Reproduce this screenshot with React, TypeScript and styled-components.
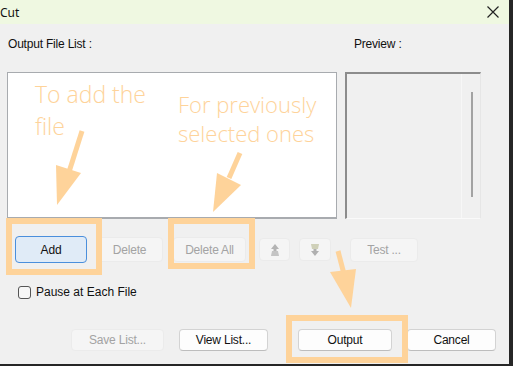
import React from "react";
import styled, { createGlobalStyle } from "styled-components";

const Global = createGlobalStyle`
  html, body { margin: 0; padding: 0; background: #262626; }
  body { width: 513px; height: 366px; overflow: hidden; font-family: "Liberation Sans", Arial, sans-serif; }
`;

const ORANGE = "#fed39a";

const Window = styled.div`
  position: relative;
  width: 509px;
  height: 364px;
  background: #f0f0f0;
  display: flex;
  flex-direction: column;
  font-size: 12px;
  color: #111;
`;

const TitleBar = styled.div`
  height: 24px;
  background: #eff8e1;
  display: flex;
  align-items: center;
  justify-content: space-between;
  padding: 0 10px 0 0;
  font-family: "Noto Sans", sans-serif;
  font-size: 12px;
`;

const Body = styled.div`
  flex: 1;
  display: flex;
  flex-direction: column;
  padding: 13px 0 0 7px;
`;

const LabelRow = styled.div`
  display: flex;
  height: 14px;
  line-height: 14px;
`;

const Label = styled.div<{ $w?: number }>`
  width: ${(p) => p.$w ?? 0}px;
  padding-left: ${(p) => (p.$w ? 1 : 4)}px;
  letter-spacing: -0.2px;
`;

const ListsRow = styled.div`
  display: flex;
  gap: 8px;
  margin-top: 21px;
  height: 147px;
`;

const ListBox = styled.div`
  width: 330px;
  box-sizing: border-box;
  background: #fff;
  border: 1px solid #a8abaf;
  border-bottom-width: 2px;
`;

const PreviewBox = styled.div`
  width: 136px;
  box-sizing: border-box;
  background: #f0f0f0;
  border-top: 2px solid #8c8c8c;
  border-left: 2px solid #8c8c8c;
  border-right: 1px solid #e6e6e6;
  border-bottom: 1px solid #fafafa;
  display: flex;
  justify-content: flex-end;
`;

const ScrollTrack = styled.div`
  width: 19px;
  border-left: 1px solid #f7f7f7;
  display: flex;
  justify-content: center;
  padding-top: 18px;
  box-sizing: border-box;
`;

const ScrollThumb = styled.div`
  width: 2px;
  height: 105px;
  margin-left: 1px;
  background: #a3a3a3;
`;

const ButtonRow = styled.div`
  display: flex;
  align-items: center;
  margin-top: 17px;
  padding-left: 8px;
  height: 27px;
`;

const Btn = styled.div<{ $w: number; $h?: number; $gap?: number; $state?: "primary" | "disabled" | "normal" }>`
  width: ${(p) => p.$w}px;
  height: ${(p) => p.$h ?? 22}px;
  margin-right: ${(p) => p.$gap ?? 0}px;
  box-sizing: border-box;
  border-radius: 4px;
  display: flex;
  align-items: center;
  justify-content: center;
  letter-spacing: -0.2px;
  ${(p) =>
    p.$state === "primary"
      ? `background:#e0ebf7;border:1px solid #4b8fdc;color:#111;`
      : p.$state === "disabled"
      ? `background:#f5f5f5;border:1px solid #ebebeb;color:#a3a3a3;`
      : `background:#fdfdfd;border:1px solid #d3d3d3;border-bottom-color:#bdbdbd;color:#111;`}
`;

const CheckRow = styled.label`
  display: flex;
  align-items: center;
  gap: 5px;
  margin-top: 22px;
  padding-left: 11px;
  height: 14px;
`;

const CheckBox = styled.span`
  width: 13px;
  height: 13px;
  box-sizing: border-box;
  border: 1px solid #555;
  border-radius: 3px;
  background: #f6f6f6;
`;

const BottomRow = styled.div`
  display: flex;
  align-items: center;
  margin-top: 30px;
  padding-left: 64px;
`;

const Overlay = styled.svg`
  position: absolute;
  left: 0;
  top: 0;
  pointer-events: none;
`;

const Note = styled.div<{ $x: number; $y: number; $size: number; $lh: number }>`
  position: absolute;
  left: ${(p) => p.$x}px;
  top: ${(p) => p.$y}px;
  font-family: "Open Sans", "Noto Sans", sans-serif;
  font-weight: 300;
  font-size: ${(p) => p.$size}px;
  line-height: ${(p) => p.$lh}px;
  color: ${ORANGE};
  white-space: pre;
  pointer-events: none;
`;

const UpIcon = () => (
  <svg width="10" height="14" viewBox="0 0 10 14">
    <path d="M5 1 L9 6 L6.5 6 L6.5 8 L3.5 8 L3.5 6 L1 6 Z" fill="#b4b4b4" />
    <path d="M2 8 L8 8 L9 13 L1 13 Z" fill="#c4c4c4" />
  </svg>
);

const DownIcon = () => (
  <svg width="10" height="14" viewBox="0 0 10 14">
    <path d="M1 1 L9 1 L8 6 L2 6 Z" fill="#cfd0b8" />
    <path d="M5 13 L9 8 L6.5 8 L6.5 6 L3.5 6 L3.5 8 L1 8 Z" fill="#b0b0b0" />
  </svg>
);

const CloseIcon = () => (
  <svg width="12" height="12" viewBox="0 0 12 12">
    <path d="M0.5 0.5 L11.5 11.5 M11.5 0.5 L0.5 11.5" stroke="#222" strokeWidth="1.2" />
  </svg>
);

export default function App() {
  return (
    <>
      <Global />
      <Window>
        <TitleBar>
          <span>Cut</span>
          <CloseIcon />
        </TitleBar>
        <Body>
          <LabelRow>
            <Label $w={345}>Output File List :</Label>
            <Label $w={120}>Preview :</Label>
          </LabelRow>
          <ListsRow>
            <ListBox />
            <PreviewBox>
              <ScrollTrack>
                <ScrollThumb />
              </ScrollTrack>
            </PreviewBox>
          </ListsRow>
          <ButtonRow>
            <Btn $w={72} $h={27} $gap={9} $state="primary">Add</Btn>
            <Btn $w={67} $h={25} $gap={10} $state="disabled">Delete</Btn>
            <Btn $w={73} $h={25} $gap={13} $state="disabled">Delete All</Btn>
            <Btn $w={31} $h={23} $gap={9} $state="disabled"><UpIcon /></Btn>
            <Btn $w={32} $h={23} $gap={19} $state="disabled"><DownIcon /></Btn>
            <Btn $w={68} $h={24} $state="disabled">Test ...</Btn>
          </ButtonRow>
          <CheckRow>
            <CheckBox />
            <span>Pause at Each File</span>
          </CheckRow>
          <BottomRow>
            <Btn $w={93} $gap={15} $state="disabled">Save List...</Btn>
            <Btn $w={89} $gap={30}>View List...</Btn>
            <Btn $w={94} $gap={15}>Output</Btn>
            <Btn $w={89}>Cancel</Btn>
          </BottomRow>
        </Body>
        <Overlay width="509" height="364" viewBox="0 0 509 364">
          <g fill="none" stroke={ORANGE} strokeWidth="6">
            <rect x="9" y="221" width="90" height="51" />
            <rect x="171" y="221" width="81" height="45" />
            <rect x="289" y="318" width="116" height="42" />
          </g>
          <g stroke={ORANGE} strokeWidth="5" strokeLinecap="butt">
            <line x1="82" y1="131" x2="69" y2="172" />
            <line x1="240" y1="153" x2="229" y2="178" />
            <line x1="338" y1="251" x2="344" y2="274" />
          </g>
          <g fill={ORANGE}>
            <polygon points="56,165 81,173 57,205" />
            <polygon points="217,173 241,185 213,212" />
            <polygon points="330,272 356,269 351,308" />
          </g>
        </Overlay>
        <Note $x={35} $y={78} $size={23} $lh={32}>{"To add the\nfile"}</Note>
        <Note $x={178} $y={90} $size={22} $lh={29}>{"For previously\nselected ones"}</Note>
      </Window>
    </>
  );
}
